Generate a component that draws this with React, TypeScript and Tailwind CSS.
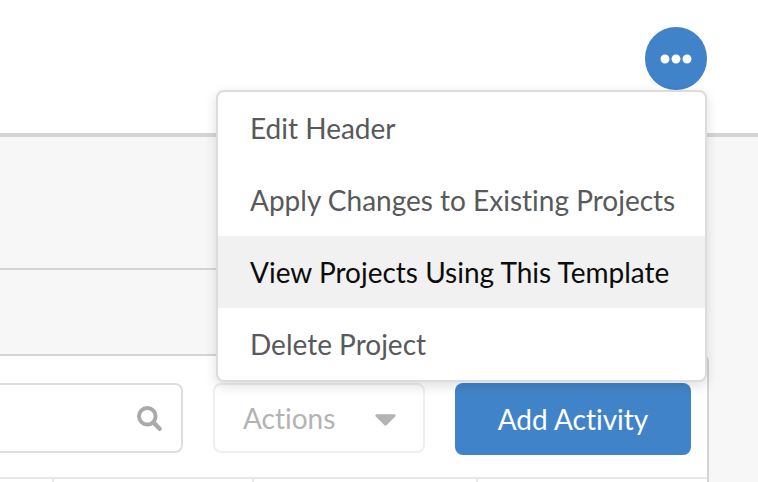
import { FaCaretDown, FaEllipsisH } from "react-icons/fa";

const menuItems = [
  { label: "Edit Header", active: false },
  { label: "Apply Changes to Existing Projects", active: false },
  { label: "View Projects Using This Template", active: true },
  { label: "Delete Project", active: false }
];

function SearchIcon() {
  return (
    <svg viewBox="0 0 25 25" className="h-[25px] w-[25px]" fill="none" stroke="currentColor" aria-hidden="true">
      <circle cx="10.3" cy="10.3" r="8.3" strokeWidth="4" />
      <path d="M16.4 16.4 22.6 22.7" strokeWidth="4.4" strokeLinecap="round" />
    </svg>
  );
}

function ProjectMenu() {
  return (
    <div className="relative">
      <button type="button" aria-label="Project options" aria-expanded="true" className="flex h-[63px] w-[62px] items-center justify-center rounded-full bg-[#4183c9] text-white">
        <FaEllipsisH size={32} />
      </button>
      <div role="menu" className="absolute right-0 top-full z-10 w-[491px] overflow-hidden rounded-lg border-2 border-[#dcdcdd] bg-white shadow-[0_4px_12px_rgba(34,36,38,0.15)]">
        {menuItems.map((item) => (
          <button
            key={item.label}
            type="button"
            role="menuitem"
            className={`block h-[72px] w-full whitespace-nowrap px-8 text-left ${item.active ? "bg-[#f1f1f1] text-[#0c0c0c]" : "text-[#58595b]"}`}
          >
            {item.label}
          </button>
        ))}
      </div>
    </div>
  );
}

function Toolbar() {
  return (
    <div className="flex items-start pb-[22px] pr-4 pt-[27px]">
      <label className="flex h-[70px] min-w-0 flex-1 items-center rounded-r-lg border-2 border-l-0 border-[#dedede] pr-[19px] text-[#aaaaaa]">
        <input type="search" aria-label="Search activities" className="h-full min-w-0 flex-1 px-4 text-[#58595b] outline-none" />
        <SearchIcon />
      </label>
      <button type="button" disabled className="ml-[30px] flex h-[70px] w-[212px] items-center justify-between rounded-lg border-2 border-[#efefef] pl-7 pr-5 text-[#b3b3b3]">
        Actions
        <FaCaretDown size={35} />
      </button>
      <button type="button" className="ml-[30px] h-[72px] w-[236px] rounded-lg bg-[#4183c9] text-white">
        Add Activity
      </button>
    </div>
  );
}

export default function App() {
  return (
    <div className="flex min-h-screen flex-col bg-[#f7f7f7] font-[Lato,sans-serif] text-[28px] leading-9 [font-variant-ligatures:none]">
      <header className="flex justify-end border-b-4 border-[#d4d4d4] bg-white pb-[43px] pr-[51px] pt-[27px]">
        <ProjectMenu />
      </header>

      <div className="mr-[51px] h-[133px] border-b-2 border-[#d4d4d5]" />

      <main className="flex flex-1 flex-col pr-[49px] pt-[84px]">
        <section className="flex flex-1 flex-col rounded-tr-lg border-r-2 border-t-2 border-[#d4d4d5] bg-white">
          <Toolbar />
          <div className="flex flex-1 border-t-2 border-[#e8e8e8]">
            <div className="w-[54px] border-r-2 border-[#e8e8e8]" />
            <div className="w-[200px] border-r-2 border-[#e8e8e8]" />
            <div className="w-[224px] border-r-2 border-[#e8e8e8]" />
            <div className="flex-1" />
          </div>
        </section>
      </main>
    </div>
  );
}
